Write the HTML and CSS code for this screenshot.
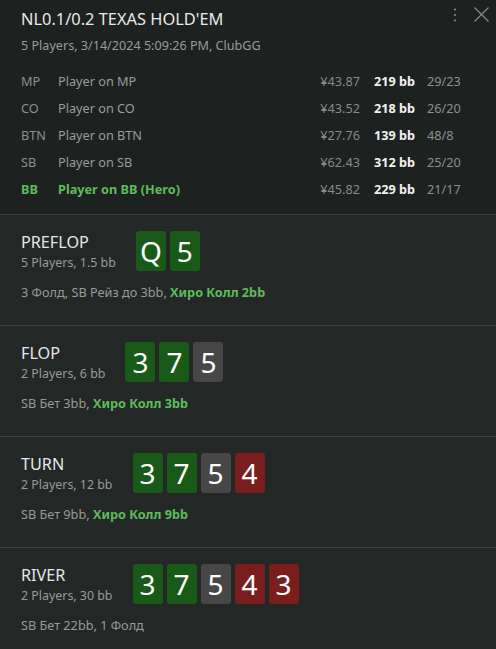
FILE: index.html
```html
<!DOCTYPE html>
<html>
<head>
<meta charset="utf-8">
<link rel="stylesheet" href="styles.css">
</head>
<body>
<div class="panel">
  <header class="head">
    <div class="icons">
      <svg class="kebab" width="4" height="14" viewBox="0 0 4 14"><circle cx="2" cy="1.5" r="1.1" fill="#858887"/><circle cx="2" cy="7" r="1.1" fill="#858887"/><circle cx="2" cy="12.5" r="1.1" fill="#858887"/></svg>
      <svg class="close" width="15" height="15" viewBox="0 0 15 15"><path d="M0.5 0.5L14.5 14.5M14.5 0.5L0.5 14.5" stroke="#858887" stroke-width="1.2" fill="none"/></svg>
    </div>
    <h1 class="title">NL0.1/0.2 TEXAS HOLD'EM</h1>
    <div class="sub">5 Players, 3/14/2024 5:09:26 PM, ClubGG</div>
    <div class="players">
      <div class="row"><span class="pos">MP</span><span class="name">Player on MP</span><span class="money">¥43.87</span><span class="bb">219 bb</span><span class="ratio">29/23</span></div>
      <div class="row"><span class="pos">CO</span><span class="name">Player on CO</span><span class="money">¥43.52</span><span class="bb">218 bb</span><span class="ratio">26/20</span></div>
      <div class="row"><span class="pos">BTN</span><span class="name">Player on BTN</span><span class="money">¥27.76</span><span class="bb">139 bb</span><span class="ratio">48/8</span></div>
      <div class="row"><span class="pos">SB</span><span class="name">Player on SB</span><span class="money">¥62.43</span><span class="bb">312 bb</span><span class="ratio">25/20</span></div>
      <div class="row hero"><span class="pos">BB</span><span class="name">Player on BB (Hero)</span><span class="money">¥45.82</span><span class="bb">229 bb</span><span class="ratio">21/17</span></div>
    </div>
  </header>

  <section class="street">
    <div class="top">
      <div class="info"><div class="sname">PREFLOP</div><div class="sdesc">5 Players, 1.5 bb</div></div>
      <div class="cards"><span class="card g">Q</span><span class="card g">5</span></div>
    </div>
    <div class="act">3 Фолд, SB Рейз до 3bb, <b class="hc">Хиро Колл 2bb</b></div>
  </section>

  <section class="street">
    <div class="top">
      <div class="info"><div class="sname">FLOP</div><div class="sdesc">2 Players, 6 bb</div></div>
      <div class="cards"><span class="card g">3</span><span class="card g">7</span><span class="card d">5</span></div>
    </div>
    <div class="act">SB Бет 3bb, <b class="hc">Хиро Колл 3bb</b></div>
  </section>

  <section class="street">
    <div class="top">
      <div class="info"><div class="sname">TURN</div><div class="sdesc">2 Players, 12 bb</div></div>
      <div class="cards"><span class="card g">3</span><span class="card g">7</span><span class="card d">5</span><span class="card r">4</span></div>
    </div>
    <div class="act">SB Бет 9bb, <b class="hc">Хиро Колл 9bb</b></div>
  </section>

  <section class="street">
    <div class="top">
      <div class="info"><div class="sname">RIVER</div><div class="sdesc">2 Players, 30 bb</div></div>
      <div class="cards"><span class="card g">3</span><span class="card g">7</span><span class="card d">5</span><span class="card r">4</span><span class="card r">3</span></div>
    </div>
    <div class="act">SB Бет 22bb, 1 Фолд</div>
  </section>
</div>
</body>
</html>
```
FILE: styles.css
```css
html, body {
  margin: 0;
  padding: 0;
  background: #232726;
}
body {
  font-family: "Noto Sans", "Open Sans", sans-serif;
  color: #e6e6e6;
}
.panel {
  width: 496px;
  height: 649px;
  overflow: hidden;
  background: #232726;
}
.head {
  position: relative;
  background: #1d2120;
  padding: 7px 21px 12px 21px;
  border-bottom: 1px solid #3c403e;
}
.icons {
  position: absolute;
  top: 7px;
  right: 7px;
  display: flex;
  align-items: flex-start;
  gap: 17px;
}
.kebab { display: block; margin-top: 0.5px; }
.close { display: block; }
.title {
  margin: 0;
  font-size: 16.4px;
  font-weight: 400;
  line-height: 23px;
  color: #e8e8e8;
}
.sub {
  margin-top: 8px;
  font-size: 12.6px;
  line-height: 16px;
  color: #999b9a;
}
.players {
  margin-top: 13px;
}
.row {
  display: flex;
  align-items: center;
  height: 27px;
  font-size: 12.7px;
  color: #8d8f8e;
}
.pos { width: 37px; }
.name { flex: 1; color: #9a9c9b; }
.money { width: 60px; text-align: right; color: #888a89; }
.bb { width: 55px; text-align: right; color: #f2f2f2; font-weight: 700; }
.ratio { width: 48px; margin-left: 12px; color: #8d8f8e; }
.hero .pos, .hero .name { color: #5dbd5a; font-weight: 700; }
.street {
  height: 111px;
  box-sizing: border-box;
  padding: 16px 21px 0 21px;
  border-bottom: 1px solid #3c403e;
}
.top {
  display: flex;
  align-items: center;
  gap: 20px;
}
.sname {
  font-size: 16.2px;
  line-height: 23px;
  color: #e6e6e6;
}
.sdesc {
  margin-top: 1px;
  font-size: 12.4px;
  line-height: 16px;
  color: #999b9a;
}
.cards {
  display: flex;
  gap: 4px;
}
.card {
  width: 30px;
  height: 40px;
  border-radius: 3px;
  display: flex;
  align-items: center;
  justify-content: center;
  font-size: 28px;
  line-height: 1;
  color: #ffffff;
}
.card.g { background: #195a19; }
.card.d { background: #474747; }
.card.r { background: #7a1e1d; }
.act {
  margin-top: 13px;
  font-size: 12.7px;
  line-height: 16px;
  color: #999b9a;
}
.hc { color: #5dbd5a; font-weight: 700; }
```
